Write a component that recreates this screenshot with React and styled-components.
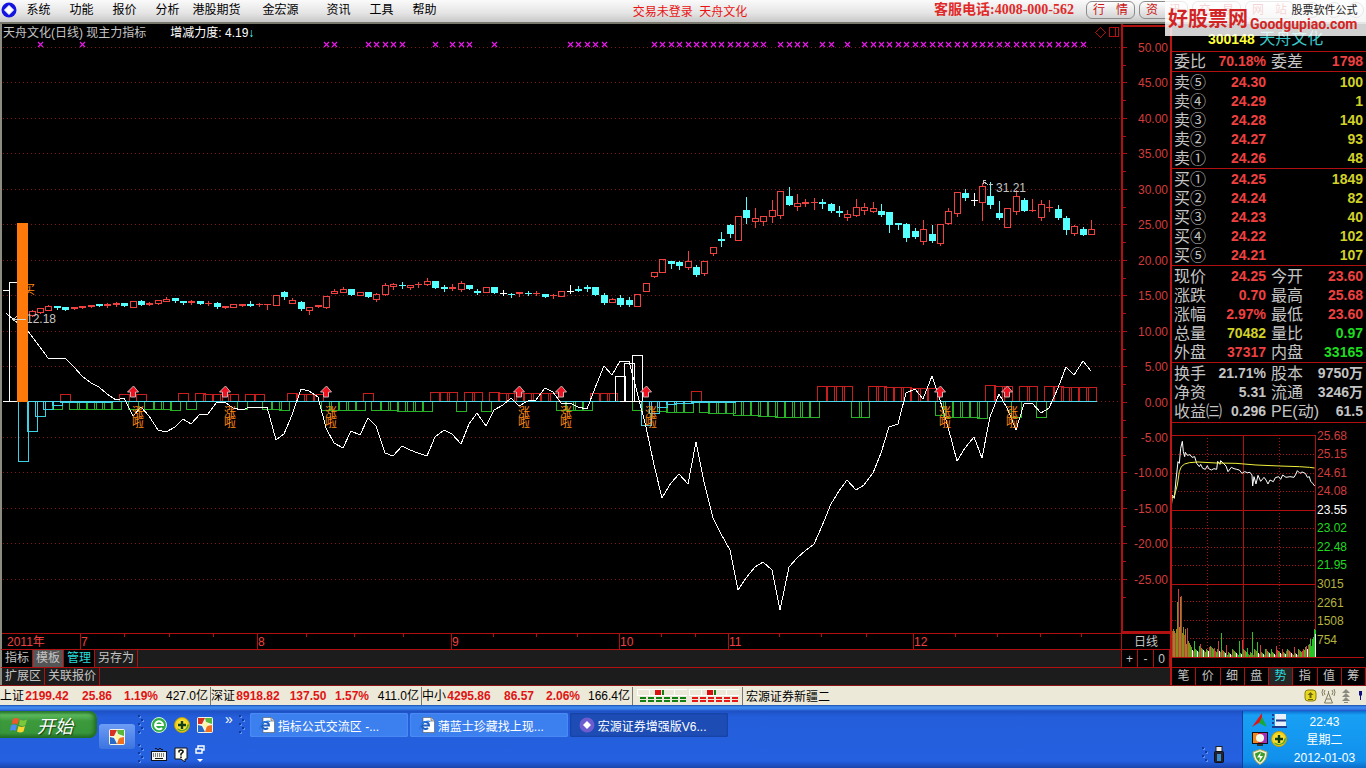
import React from "react";
import styled, { createGlobalStyle } from "styled-components";

const RED = "#f04040";
const LINE = "#b01010";
const GRID = "#861616";
const CYAN = "#54ffff";
const GRAY = "#c4c4c4";
const YELLOW = "#d2d226";
const GREEN = "#1fdc1f";
const SANS = '"Liberation Sans", "Noto Sans CJK SC", sans-serif';

const menuItems = [
  ["系统", 43],
  ["功能", 43],
  ["报价", 43],
  ["分析", 43],
  ["港股期货", 55],
  ["金宏源", 73],
  ["资讯", 43],
  ["工具", 43],
  ["帮助", 43],
];

const sells = [
  ["卖⑤", "24.30", "100"],
  ["卖④", "24.29", "1"],
  ["卖③", "24.28", "140"],
  ["卖②", "24.27", "93"],
  ["卖①", "24.26", "48"],
];

const buys = [
  ["买①", "24.25", "1849"],
  ["买②", "24.24", "82"],
  ["买③", "24.23", "40"],
  ["买④", "24.22", "102"],
  ["买⑤", "24.21", "107"],
];

const details = [
  ["现价", "24.25", RED, "今开", "23.60", RED],
  ["涨跌", "0.70", RED, "最高", "25.68", RED],
  ["涨幅", "2.97%", RED, "最低", "23.60", RED],
  ["总量", "70482", YELLOW, "量比", "0.97", GREEN],
  ["外盘", "37317", RED, "内盘", "33165", GREEN],
];

const finance = [
  ["换手", "21.71%", GRAY, "股本", "9750万", GRAY],
  ["净资", "5.31", GRAY, "流通", "3246万", GRAY],
  ["收益㈢", "0.296", GRAY, "PE(动)", "61.5", GRAY],
];

const indexes = [
  ["上证", "2199.42", "25.86", "1.19%", "427.0亿"],
  ["深证", "8918.82", "137.50", "1.57%", "411.0亿"],
  ["中小", "4295.86", "86.57", "2.06%", "166.4亿"],
];

const sideTabs = ["笔", "价", "细", "盘", "势", "指", "值", "筹"];

// one bar every STEP pixels, the first one at FIRST
const FIRST = 6.4;
const STEP = 8.41;
const ZERO = 401;
const barX = (i) => Math.round(FIRST + i * STEP);

// kind, body top, body bottom, high, low; starts at bar 3
const candles = `r 311 315 310 316|r 308 312 308 313|r 306 310 305 310|c 306 308 306 309|c 307 310 307 310
|d 307 309 307 309|d 306 308 306 308|d 305 307 305 307|c 304 306 304 306|d 304 306 303 307|d 303 305 302 306
|c 303 306 303 306|r 301 307 301 307|c 301 305 300 305|d 303 305 302 305|r 300 303 300 304|r 299 301 297 301
|c 298 301 298 302|c 301 303 301 304|d 301 303 300 304|c 301 304 301 304|d 303 304 301 305|c 303 307 302 308
|d 306 308 306 308|r 304 307 304 307|d 304 306 304 306|c 304 306 301 306|d 304 305 303 306|d 304 305 304 309
|r 295 305 295 305|c 292 297 291 299|r 300 303 298 303|c 302 309 301 310|r 307 310 307 314|d 305 307 305 307
|r 296 307 296 308|r 291 293 289 293|r 289 292 287 292|c 289 295 289 295|r 292 295 292 295|c 292 297 292 297
|r 294 299 293 301|r 285 294 283 295|r 284 286 283 289|c 285 286 282 288|r 285 287 285 289|d 284 285 282 287
|r 281 284 278 285|c 281 288 281 288|c 287 289 285 291|d 287 289 284 290|r 283 289 281 291|c 285 289 285 289
|c 291 293 289 294|r 287 292 287 292|c 287 293 287 293|w 293 294 290 295|c 294 295 293 297|d 292 294 292 296
|c 293 294 291 295|d 293 294 291 295|c 294 297 294 297|d 295 296 294 298|r 291 296 291 296|w 291 292 285 293
|c 289 291 286 291|c 287 289 285 291|c 287 295 287 295|c 295 303 293 304|r 299 302 298 302|c 298 305 295 306
|c 300 305 297 306|r 294 306 294 306|r 283 291 283 291|r 272 276 272 277|r 259 272 259 272|c 261 264 261 268
|c 262 266 261 269|r 261 267 251 269|c 267 275 265 276|r 261 273 261 275|r 247 253 247 255|c 239 241 232 246
|c 225 234 224 237|r 216 240 216 240|c 210 218 197 223|r 218 221 208 227|r 216 221 216 225|r 210 216 200 222
|r 191 215 191 218|c 196 205 187 205|r 203 206 194 210|d 202 204 199 206|d 202 203 198 209|c 202 204 199 208
|c 204 211 203 212|c 211 213 206 216|r 214 217 210 220|r 207 215 199 216|r 207 210 203 214|r 208 211 202 212
|c 211 215 204 216|c 212 225 212 232|c 223 225 223 229|c 224 238 223 241|c 231 237 228 238|r 229 241 220 244
|c 234 241 225 242|r 224 243 224 245|r 211 223 208 224|r 192 213 192 216|c 193 198 189 200|w 200 201 193 205
|r 186 202 183 220|c 196 205 182 208|c 213 218 201 219|r 208 227 208 227|r 196 211 190 214|c 200 211 198 211
|d 210 211 199 211|r 204 217 200 220|d 207 208 200 211|c 209 218 205 219|c 218 230 216 234|r 226 233 225 235
|c 229 235 227 235|r 229 234 220 234`
  .replace(/\n/g, "")
  .split("|")
  .map((row, k) => {
    const [kind, ...v] = row.split(" ");
    return { i: k + 3, kind, v: v.map(Number) };
  });

const trend = [
  358, 359, 358, 367, 376, 383, 387, 394, 400, 398, 416, 407, 416, 430, 432,
  427, 419, 424, 414, 414, 402, 402, 408, 410, 407, 407, 407, 440, 434, 415,
  389, 391, 397, 428, 443, 448, 431, 435, 418, 426, 453, 456, 446, 450, 453,
  456, 437, 430, 434, 444, 424, 413, 426, 410, 405, 398, 406, 401, 400, 388,
  392, 403, 403, 407, 409, 388, 366, 375, 361, 361, 392, 427, 465, 498, 483,
  474, 484, 442, 482, 518, 534, 550, 590, 578, 567, 562, 570, 610, 567, 558,
  551, 544, 526, 504, 491, 480, 490, 485, 473, 453, 427, 424, 393, 389, 399,
  376, 400, 427, 461, 448, 437, 458, 417, 394, 408, 430, 404, 403, 413, 408,
  388, 367, 375, 361, 371,
];
const trendLine =
  "6,313 14,320 28,331 " +
  trend.map((y, k) => `${barX(k + 5)},${y}`).join(" ");

// from bar, to bar, outer edge
const redBars = [
  [7, 7, 394], [14, 14, 394], [16, 16, 394], [21, 21, 393], [23, 23, 393],
  [24, 27, 394], [29, 30, 394], [34, 34, 393], [35, 37, 394], [43, 43, 393],
  [51, 53, 392], [55, 56, 392], [58, 58, 392], [59, 65, 393], [70, 72, 393],
  [82, 82, 391], [97, 100, 386], [103, 104, 386], [105, 107, 387],
  [108, 110, 388], [117, 117, 385], [118, 119, 386], [121, 122, 386],
  [124, 125, 386], [126, 129, 387],
];
const greenBars = [
  [6, 6, 409], [8, 13, 409], [15, 15, 409], [17, 19, 409], [20, 20, 410],
  [22, 22, 409], [28, 28, 409], [31, 32, 409], [33, 33, 410], [38, 42, 410],
  [44, 46, 410], [47, 50, 411], [54, 54, 411], [57, 57, 411], [66, 69, 410],
  [75, 75, 410], [78, 78, 411], [79, 81, 412], [83, 83, 412], [84, 86, 413],
  [87, 89, 415], [90, 91, 416], [92, 96, 417], [101, 102, 417],
  [111, 111, 415], [112, 115, 417], [116, 116, 418], [120, 120, 417],
  [123, 123, 417],
];
const cyanBars = [
  [2, 2, 461], [3, 3, 431], [4, 4, 416], [5, 5, 409], [6, 6, 405],
  [7, 12, 402], [76, 76, 425], [77, 77, 413], [78, 78, 407], [79, 79, 404],
  [80, 81, 403], [82, 86, 402],
];
const whiteBars = [[73, 73, 376], [74, 74, 363], [75, 75, 355]];

const crosses = [
  [4, 4], [9, 9], [38, 39], [43, 47], [51, 51], [53, 55], [58, 58], [67, 71],
  [77, 90], [92, 95], [97, 98], [100, 100], [102, 128],
];
const signals = [15, 26, 38, 61, 66, 76, 111, 119];

const expand = (list) =>
  list.flatMap(([from, to, y]) =>
    Array.from({ length: to - from + 1 }, (_, k) => [from + k, y])
  );

const scale = Array.from({ length: 16 }, (_, k) => ({
  label: (50 - k * 5).toFixed(2),
  y: Math.round(47 + k * 35.45),
}));

const months = [
  [80, "7"], [257, "8"], [451, "9"], [619, "10"], [728, "11"], [913, "12"],
];
const weeks = [
  124, 169, 213, 306, 354, 403, 493, 536, 577, 661, 695, 779, 821, 866, 955,
  997, 1040, 1081,
];

function Bars({ list, color }) {
  return expand(list).map(([i, y]) => (
    <rect
      key={i}
      x={barX(i) - 5 + 0.5}
      y={Math.min(y, ZERO) + 0.5}
      width={10}
      height={Math.abs(ZERO - y)}
      fill="none"
      stroke={color}
    />
  ));
}

function Candle({ i, kind, v }) {
  const [top, bottom, high, low] = v;
  const x = barX(i);
  const color = { r: RED, d: RED, c: CYAN, w: "#fff" }[kind];
  if (kind === "r") {
    return (
      <g stroke={color} fill="none">
        {high < top && <path d={`M${x + 0.5} ${high}V${top}`} />}
        {low > bottom && <path d={`M${x + 0.5} ${bottom}V${low + 1}`} />}
        <rect x={x - 2.5} y={top + 0.5} width={6} height={bottom - top} />
      </g>
    );
  }
  return (
    <g fill={color}>
      <rect x={x} y={high} width={1} height={low - high + 1} />
      <rect
        x={x - 3}
        y={top}
        width={7}
        height={kind === "w" ? 1 : bottom - top}
      />
    </g>
  );
}

function MainChart() {
  return (
    <ChartSvg viewBox="0 24 1170 625" shapeRendering="crispEdges">
      <rect x="0" y="24" width="2" height="625" fill="#8c8c80" />
      {scale.map(({ label, y }) => (
        <g key={label}>
          {label !== "0.00" && (
            <path
              d={`M3 ${y + 0.5}H1120`}
              stroke={GRID}
              strokeDasharray="1 3"
            />
          )}
          <path
            d={`M1123 ${y + 0.5}h4M1123 ${y + 18.5}h3`}
            stroke={LINE}
          />
          <ChartText x="1168" y={y + 5} textAnchor="end" fill="#d23c3c">
            {label}
          </ChartText>
        </g>
      ))}
      <path d="M1097 401.5H1120" stroke={GRID} strokeDasharray="1 3" />
      <path d="M1122 24V632H1170M1121 25.5H1170" stroke={LINE} strokeWidth="2" fill="none" />

      {expand(crosses).map(([i]) => (
        <path
          key={i}
          d={`M${barX(i) - 2} 42l5 5m0 -5l-5 5`}
          stroke="#e81be8"
          strokeWidth="1.2"
          fill="none"
          shapeRendering="auto"
        />
      ))}
      <g fill="none" stroke={LINE}>
        <path d="M1100.5 27.5l5 5l-5 5l-5 -5z" />
        <path d="M1109.5 27.5h9v9h-9zM1115.5 27.5v9" />
      </g>

      <Bars list={redBars} color="#c81e1e" />
      <Bars list={greenBars} color="#27b427" />
      <Bars list={cyanBars} color="#3cd2e6" />
      <Bars list={whiteBars} color="#fff" />
      <path d="M3 401.5H1097" stroke="#50dcf0" />
      <path d="M3 401.5H17M620 401.5H642" stroke="#fff" />

      {candles.map((c) => (
        <Candle key={c.i} {...c} />
      ))}
      <polyline points={trendLine} fill="none" stroke="#fff" />
      <path d="M9.5 401V282.5H17M3 290.5H9" fill="none" stroke="#fff" />

      {signals.map((i) => (
        <g key={i}>
          <path
            d={`M${barX(i)} 386l5 6h-3v5h-5v-5h-3z`}
            transform="translate(.5 0)"
            fill="#f01020"
            stroke="#c8b4b4"
            shapeRendering="auto"
          />
          <SignalText x={barX(i) - 1} y="417">涨</SignalText>
          <SignalText x={barX(i) - 1} y="427">啦</SignalText>
        </g>
      ))}

      <SignalText x="23" y="294">买</SignalText>
      <ChartText x="26" y="323" fill={GRAY}>12.18</ChartText>
      <rect x="17" y="223" width="11" height="179" fill="#ff7a0a" />
      <path d="M13 319.5H26M17 316.5l-4 3l4 3" stroke="#d8d8c8" fill="none" />
      <path d="M986 180.5h-3v3M983 181l5 4M989 184.5h4" stroke={GRAY} fill="none" />
      <ChartText x="996" y="192" fill={GRAY}>31.21</ChartText>

      <path d="M2 633.5H1170M1121.5 633V649" stroke={LINE} />
      <ChartText x="7" y="646" fill={RED}>2011年</ChartText>
      {months.map(([x, label]) => (
        <g key={x}>
          <path d={`M${x + 0.5} 633V649`} stroke={LINE} />
          <ChartText x={x + 1} y="646" fill={RED}>
            {label}
          </ChartText>
        </g>
      ))}
      {weeks.map((x) => (
        <path key={x} d={`M${x + 0.5} 633v4`} stroke={LINE} />
      ))}
      <ChartText x="1146" y="646" textAnchor="middle" fill={GRAY}>
        日线
      </ChartText>
    </ChartSvg>
  );
}

const priceLine =
  "16,262 18,225 25,235 30,180 36,125 40,130 44,85 49,64 52,95 56,110 58,97 64,106 72,104 78,112 86,110 92,130 100,140 104,133 110,145 118,148 124,137 128,146 136,150 144,146 152,148 155,124 162,133 164,122 174,132 180,138 186,155 196,142 204,146 212,148 220,150 228,160 236,155 244,158 252,157 258,165 260,198 264,170 270,192 276,166 284,184 294,172 300,180 306,192 312,180 322,185 328,173 338,170 344,178 350,165 360,172 372,170 384,172 390,162 394,152 402,160 408,156 418,160 424,172 430,170 434,184 440,190 446,198";
const averageLine =
  "16,262 18,235 26,225 34,195 40,155 46,140 56,132 70,128 96,126 150,129 210,130 270,135 340,138 400,140 430,142 446,144";

const miniLabels = [
  ["25.68", 440, "#d23c3c"],
  ["25.15", 458, "#d23c3c"],
  ["24.61", 477, "#d23c3c"],
  ["24.08", 495, "#d23c3c"],
  ["23.55", 514, "#fff"],
  ["23.02", 532, GREEN],
  ["22.48", 551, GREEN],
  ["21.95", 569, GREEN],
  ["3015", 588, "#b4b43c"],
  ["2261", 607, "#b4b43c"],
  ["1508", 625, "#b4b43c"],
  ["754", 644, "#b4b43c"],
];

// minute volume: tall after the open, quiet in between, rising at the close
const volumePeaks = {
  4: 28, 5: 55, 6: 68, 7: 30, 8: 60, 9: 61, 10: 24, 11: 30, 12: 22, 13: 28,
  15: 29, 16: 16, 22: 16, 28: 13, 37: 10, 42: 9, 46: 16, 49: 24, 54: 12, 67: 16,
  70: 17, 75: 9, 80: 25, 85: 15, 88: 12, 94: 8, 99: 8, 104: 11, 110: 8, 114: 6,
  118: 5, 122: 10, 130: 6, 134: 11, 136: 12, 138: 18, 140: 18, 141: 20, 142: 28,
  143: 27,
};
const volumeColors = ["#27c427", "#d23c3c", "#fff", "#27c427", "#8c8c1e", "#d23c3c"];
const volumes = Array.from({ length: 144 }, (_, k) => {
  const noise = (k * 7919) % 11;
  const base = k < 20 ? 26 - k : k < 50 ? 5 : k > 130 ? 7 : 2;
  let color = volumeColors[noise % 6];
  if (k < 18) color = k % 3 ? "#8c8c1e" : "#c83c3c";
  if (k > 40 && volumePeaks[k]) color = k % 2 && k < 138 ? "#27c427" : "#d23c3c";
  if (k === 80 || k > 137) color = "#27c427";
  return { h: volumePeaks[k] || base + (noise % 7), color };
});

function MiniChart() {
  return (
    <ChartSvg viewBox="1172 423 194 244" shapeRendering="crispEdges">
      <g stroke={LINE} fill="none">
        <path d="M1172 435.5H1315M1172 510.5H1315M1172 584.5H1315M1172 657.5H1364M1243.5 435V657M1315.5 435V657" />
        <path
          strokeDasharray="1 2"
          d="M1172 454.5H1315M1172 473.5H1315M1172 491.5H1315M1172 528.5H1315M1172 547.5H1315M1172 565.5H1315M1172 601.5H1315M1172 620.5H1315M1172 638.5H1315M1207.5 435V657M1279.5 435V657"
        />
      </g>
      {volumes.map(({ h, color }, k) => (
        <rect key={k} x={1172 + k} y={657 - h} width="1" height={h} fill={color} />
      ))}
      <rect x="1315" y="634" width="1" height="23" fill="#fff" />
      <g transform="translate(1166 420) scale(.33333)" fill="none" shapeRendering="auto">
        <polyline points={priceLine} stroke="#fff" strokeWidth="3" />
        <polyline points={averageLine} stroke="#f0f03c" strokeWidth="3" />
      </g>
      {miniLabels.map(([label, y, color]) => (
        <ChartText key={label} x="1317" y={y} fill={color}>
          {label}
        </ChartText>
      ))}
    </ChartSvg>
  );
}

function OrderTable({ rows }) {
  return (
    <QuoteTable>
      <tbody>
        {rows.map(([label, price, volume]) => (
          <tr key={label}>
            <Label>{label}</Label>
            <Value $color={RED}>{price}</Value>
            <Value $color={YELLOW} $span>
              {volume}
            </Value>
          </tr>
        ))}
      </tbody>
    </QuoteTable>
  );
}

function PairTable({ rows }) {
  return (
    <QuoteTable>
      <tbody>
        {rows.map(([a, av, ac, b, bv, bc]) => (
          <tr key={a}>
            <Label>{a}</Label>
            <Value $color={ac}>{av}</Value>
            <Label $second>{b}</Label>
            <Value $color={bc}>{bv}</Value>
          </tr>
        ))}
      </tbody>
    </QuoteTable>
  );
}

function BrowserIcon() {
  return (
    <svg width="16" height="16" viewBox="0 0 16 16">
      <path d="M4 .5h8l3.500 3.500v11.500H4z" fill="#fff" stroke="#555" strokeWidth=".6" />
      <path d="M12 .5v3.500h3.500" fill="#ccc" stroke="#555" strokeWidth=".6" />
      <path d="M3 8.500h7A3.600 3.600 0 1 0 9 11" fill="none" stroke="#1f5fc0" strokeWidth="2" />
      <path d="M.5 13C0 8 6 3 11.500 4.500" fill="none" stroke="#2a7ae0" strokeWidth="1.200" />
    </svg>
  );
}

function ColorCube() {
  return (
    <svg width="16" height="16" viewBox="0 0 16 16">
      <rect width="16" height="16" rx="2" fill="#f4f4e4" />
      <path d="M1 1h7l-3 6H1z" fill="#d83020" />
      <path d="M8 1h7v6l-6-2z" fill="#58b838" />
      <path d="M1 8l4 1 3 6H1z" fill="#2868c8" />
      <path d="M10 9l5-1v7H8z" fill="#f0701c" />
      <path d="M6 6l4-1 1 4-4 2z" fill="#fff6a0" />
    </svg>
  );
}

function PlusBall() {
  return (
    <svg width="16" height="16" viewBox="0 0 16 16">
      <circle cx="8" cy="8" r="7.500" fill="#f2d21c" stroke="#b89a10" />
      <path d="M3 12A7 7 0 0 0 15 7z" fill="#58a828" />
      <circle cx="8" cy="8" r="5" fill="#fbe23a" />
      <path d="M8 4v8M4 8h8" stroke="#123c12" strokeWidth="2.400" />
    </svg>
  );
}

function GreenBrowser() {
  return (
    <svg width="16" height="16" viewBox="0 0 16 16">
      <circle cx="8" cy="8" r="7.500" fill="#2fae48" stroke="#d8f4dc" />
      <path d="M4 8h8A4 4 0 1 0 11 11" fill="none" stroke="#fff" strokeWidth="2" />
    </svg>
  );
}

function KeyboardIcon() {
  return (
    <svg width="16" height="14" viewBox="0 0 16 14">
      <path d="M4 2q1-2 2 0t2 0t2 0t2 0" stroke="#111" fill="none" />
      <rect x=".5" y="4.500" width="15" height="9" fill="#f4f4f0" stroke="#111" />
      <path d="M2 7h12M2 9h12" stroke="#111" strokeDasharray="1 1" />
      <path d="M4 11.500h8" stroke="#111" />
    </svg>
  );
}

function HelpIcon() {
  return (
    <svg width="14" height="15" viewBox="0 0 14 15">
      <path d="M1 1h12v11h-2v3l-4-3H1z" fill="#fffff0" stroke="#111" />
      <path d="M5 5.500V4q2-2 4 0v1L7 7v1.500M7 9.500V11" fill="none" stroke="#111" strokeWidth="1.600" />
    </svg>
  );
}

function RestoreIcon() {
  return (
    <svg width="10" height="18" viewBox="0 0 10 18">
      <path d="M3 4V1h6v4H7M1 4h6v4H1z" fill="none" stroke="#fff" strokeWidth="1.400" />
      <path d="M2 14h6l-3 3z" fill="#fff" />
    </svg>
  );
}

function Grip({ rows }) {
  return (
    <svg width="6" height={rows * 4} viewBox={`0 0 6 ${rows * 4}`} shapeRendering="crispEdges">
      {Array.from({ length: rows }, (_, r) => (
        <g key={r}>
          <rect x={r % 2 ? 4 : 1} y={r * 4 + 1} width="2" height="2" fill="#5c92f4" />
          <rect x={r % 2 ? 3 : 0} y={r * 4} width="2" height="2" fill="#12389c" />
        </g>
      ))}
    </svg>
  );
}

function Gauges() {
  const cells = [0, 1, 2, 3, 4, 5];
  return (
    <svg width="104" height="14" viewBox="0 0 104 14" shapeRendering="crispEdges">
      {[[0, "#128012"], [52, "#e41818"]].map(([x, color]) => (
        <g key={x}>
          <path d={`M${x} .5h50M${x + 0.5} 0v6M${x + 12.5} 0v6M${x + 37.5} 0v6M${x} 6.500h50`} stroke="#fff" />
          <rect x={x + 18} y="1" width="6" height="5" fill="#d81010" />
          <rect x={x + 25} y="1" width="2" height="5" fill="#128012" />
          {cells.map((c) => (
            <g key={c} fill={color}>
              <rect x={x + 3 + c * 8} y="8" width="6" height="2" />
              <rect x={x + 3 + c * 8} y="11" width="6" height="2" />
            </g>
          ))}
        </g>
      ))}
    </svg>
  );
}

function StatusIcons() {
  return (
    <svg width="60" height="16" viewBox="0 0 60 16">
      <rect x="1" y="2" width="11" height="11" rx="3" fill="#e8d820" stroke="#8c8010" />
      <path d="M6.500 4l3 3h-2v3h-2V7h-2z" fill="#6c6408" />
      <path d="M4 11.500h5" stroke="#6c6408" />
      <g fill="none" stroke="#807c60">
        <path d="M24.500 5l-4 10h8zM22 11h5M24.500 3v3" />
        <path d="M21 2q-2 2 0 5M28 2q2 2 0 5M19 1q-2 3 0 7M30 1q2 3 0 7" />
      </g>
      <path d="M42 1l4 4h-8zM42 5l4 4h-8zM42 9l4 4h-8zM40 14h4v1h-4z" fill="#8a8a80" />
      <path d="M55 3h3v4l-1 1v4h-1V8l-1-1z" fill="#10107c" />
    </svg>
  );
}

function TrayIcons() {
  return (
    <TrayGrid>
      <svg width="16" height="16" viewBox="0 0 16 16">
        <path d="M0 14L10 0v8z" fill="#e41414" />
        <path d="M10 4l5 10-8-4z" fill="#18a838" />
      </svg>
      <svg width="16" height="16" viewBox="0 0 16 16">
        <rect x="4" y="1" width="11" height="13" fill="#e8f0fc" />
        <path d="M5 7.500h10M1 2h2M1 6h2M1 10h2M1 14h15" stroke="#1c3c90" strokeWidth="2" />
      </svg>
      <svg width="16" height="16" viewBox="0 0 16 16">
        <rect x=".5" y="1.500" width="15" height="11" fill="#d02858" stroke="#111" />
        <path d="M1 2h5v10H1z" fill="#f08820" />
        <path d="M11 2h4v10h-4z" fill="#a030c0" />
        <circle cx="8" cy="7" r="4" fill="#f4fce8" />
        <path d="M5 15h6v-2H5z" fill="#333" />
      </svg>
      <PlusBall />
      <svg width="16" height="16" viewBox="0 0 16 16">
        <path d="M8 .5L15 3q0 9-7 12.500Q1 12 1 3z" fill="#f4f4d8" stroke="#b8a850" />
        <path d="M8 2.500l5 2q-.5 6-5 9-4.500-3-5-9z" fill="#3c9c2c" />
        <path d="M9 3L5 8.500h3L7 13l4-6H8z" fill="#fff" />
      </svg>
    </TrayGrid>
  );
}

function App() {
  return (
    <>
      <GlobalStyle />
      <Desktop>
        <MenuBar>
          <svg width="16" height="16" viewBox="0 0 16 16">
            <circle cx="8" cy="8" r="7.500" fill="#1414e0" />
            <path d="M8 3.500L12.500 8 8 12.500 3.500 8z" fill="#fff" stroke="#fff" strokeLinejoin="round" />
          </svg>
          <Menu>
            {menuItems.map(([label, width]) => (
              <MenuItem key={label} $width={width}>
                {label}
              </MenuItem>
            ))}
          </Menu>
          <LoginState>交易未登录&nbsp; 天舟文化</LoginState>
          <Hotline>客服电话:4008-000-562</Hotline>
          <Pills>
            <Pill>
              <span>行</span>
              <span>情</span>
            </Pill>
            <Pill>
              <span>资</span>
              <span>讯</span>
            </Pill>
            <Pill>
              <span>交</span>
              <span>易</span>
            </Pill>
            <Pill>
              <span>网</span>
              <span>站</span>
            </Pill>
          </Pills>
          <WindowDots>
            <Dot />
            <Dot />
            <Dot />
          </WindowDots>
          <Watermark>
            <SiteName>好股票网</SiteName>
            <SiteUrl>
              <small>股票软件公式</small>
              Goodgupiao.com
            </SiteUrl>
          </Watermark>
        </MenuBar>

        <Workspace>
          <ChartPane>
            <ChartTitle>
              <span>天舟文化(日线) 现主力指标</span>
              <Strength>
                增减力度: 4.19<i>↓</i>
              </Strength>
            </ChartTitle>
            <MainChart />
            <TabRow>
              <Tab $black>指标</Tab>
              <Tab $active>模板</Tab>
              <Tab $black $cyan>管理</Tab>
              <Tab>另存为</Tab>
              <ZoomTools>
                <Tool>+</Tool>
                <Tool>-</Tool>
                <Tool>0</Tool>
              </ZoomTools>
            </TabRow>
            <TabRow>
              <Tab>扩展区</Tab>
              <Tab>关联报价</Tab>
            </TabRow>
          </ChartPane>

          <SidePanel>
            <StockName>
              <b>300148</b> 天舟文化
            </StockName>
            <Section>
              <PairTable rows={[["委比", "70.18%", RED, "委差", "1798", RED]]} />
            </Section>
            <Section $pad>
              <OrderTable rows={sells} />
            </Section>
            <Section $pad>
              <OrderTable rows={buys} />
            </Section>
            <Section $pad>
              <PairTable rows={details} />
            </Section>
            <Section $pad $bottom>
              <PairTable rows={finance} />
            </Section>
            <MiniChart />
            <SideTabs>
              {sideTabs.map((label) => (
                <SideTab key={label} $active={label === "势"}>
                  {label}
                </SideTab>
              ))}
            </SideTabs>
          </SidePanel>
        </Workspace>

        <StatusBar>
          {indexes.map(([name, value, change, percent, amount]) => (
            <IndexQuote key={name}>
              <span>{name}</span>
              <b>{value}</b>
              <b>{change}</b>
              <b>{percent}</b>
              <span>{amount}</span>
            </IndexQuote>
          ))}
          <GaugeBox>
            <Gauges />
          </GaugeBox>
          <Server>宏源证券新疆二</Server>
          <StatusIcons />
        </StatusBar>

        <Taskbar>
          <StartButton>
            <svg width="19" height="18" viewBox="0 0 19 18">
              <path d="M3 3q3-2 6 0L7.500 8.500q-3-2-6 0z" fill="#f0582c" />
              <path d="M10 3.500q3 2 7 0L15.500 9q-3 2-6.500 0z" fill="#7cc83c" />
              <path d="M1 9.500q3-2 6 0L5.500 15q-3-2-5.500 0z" fill="#4c8cf4" />
              <path d="M8.500 10q3 2 6.500 0L13.500 15.500q-3 2-6.500 0z" fill="#fcd430" />
            </svg>
            开始
          </StartButton>
          <CubeButton aria-label="桌面">
            <ColorCube />
          </CubeButton>
          <QuickLaunch>
            <QuickRow>
              <Grip rows={5} />
              <GreenBrowser />
              <PlusBall />
              <ColorCube />
              <More>»</More>
            </QuickRow>
            <QuickRow>
              <Grip rows={5} />
              <KeyboardIcon />
              <HelpIcon />
              <RestoreIcon />
            </QuickRow>
          </QuickLaunch>
          <Tasks>
            <Grip rows={5} />
            <Task>
              <BrowserIcon />
              指标公式交流区 -...
            </Task>
            <Task>
              <BrowserIcon />
              蒲蓝士珍藏找上现...
            </Task>
            <Task $active>
              <svg width="16" height="16" viewBox="0 0 16 16">
                <circle cx="8" cy="8" r="7.500" fill="#6c5cd0" />
                <path d="M8 4l4 4-4 4-4-4z" fill="#fff" />
              </svg>
              宏源证券增强版V6...
            </Task>
          </Tasks>
          <Devices>
            <Grip rows={4} />
            <svg width="10" height="17" viewBox="0 0 10 17">
              <rect x="2" y=".5" width="6" height="5" fill="#eee" stroke="#222" />
              <rect x=".5" y="5.500" width="9" height="11" rx="1" fill="#223" stroke="#111" />
              <rect x="3" y="8" width="4" height="7" fill="#3c8cc8" />
            </svg>
          </Devices>
          <Tray>
            <TrayIcons />
            <Clock>
              <span>22:43</span>
              <span>星期二</span>
              <span>2012-01-03</span>
            </Clock>
          </Tray>
        </Taskbar>
      </Desktop>
    </>
  );
}

const GlobalStyle = createGlobalStyle`
  * {
    box-sizing: border-box;
  }

  body {
    margin: 0;
    background: #000;
    font-family: ${SANS};
    font-size: 12px;
  }

  button {
    margin: 0;
    padding: 0;
    border: 0;
    background: none;
    font: inherit;
    color: inherit;
    white-space: nowrap;
  }

  svg {
    flex: none;
  }
`;

const Desktop = styled.div`
  display: flex;
  flex-direction: column;
  min-height: 100vh;
`;

const MenuBar = styled.header`
  position: relative;
  display: flex;
  align-items: center;
  height: 24px;
  padding: 0 2px 2px 1px;
  background: linear-gradient(#fafafa, #e4e4e4 60%, #c8c8c8);
  border-bottom: 2px solid #77776c;
  color: #000;
`;

const Menu = styled.nav`
  display: flex;
`;

const MenuItem = styled.button`
  width: ${(props) => props.$width}px;
  line-height: 20px;
`;

const LoginState = styled.div`
  flex: 1;
  text-align: center;
  color: #e81414;
`;

const Hotline = styled.div`
  font-family: "Liberation Serif", "Noto Sans CJK SC", serif;
  font-size: 14px;
  font-weight: bold;
  line-height: 20px;
  color: #e02a2a;
`;

const Pills = styled.div`
  display: flex;
  gap: 4px;
  margin: 0 10px 0 12px;
`;

const Pill = styled.button`
  display: flex;
  justify-content: space-between;
  width: 49px;
  height: 18px;
  padding: 0 6px;
  border: 1px solid #8c8c8c;
  border-radius: 6px;
  background: linear-gradient(#fff, #d4d4d4);
  color: #c81414;
  line-height: 16px;
`;

const WindowDots = styled.div`
  display: flex;
  gap: 6px;
`;

const Dot = styled.span`
  width: 16px;
  height: 16px;
  border: 1px solid #777;
  border-radius: 50%;
`;

/* floats over the menu bar and the head of the side panel */
const Watermark = styled.div`
  position: absolute;
  top: 0;
  right: 0;
  z-index: 2;
  display: flex;
  gap: 2px;
  width: 201px;
  height: 36px;
  padding-left: 3px;
  background: rgba(255, 255, 255, 0.82);
  color: #d22424;
`;

const SiteName = styled.span`
  font-size: 20px;
  font-weight: bold;
  line-height: 38px;
`;

const SiteUrl = styled.span`
  display: flex;
  flex-direction: column;
  padding-top: 5px;
  font-family: Roboto, ${SANS};
  font-size: 14px;
  font-weight: bold;
  line-height: 14px;

  small {
    align-self: flex-end;
    font-size: 11px;
    font-weight: normal;
    line-height: 12px;
    color: #222;
  }
`;

const Workspace = styled.main`
  display: grid;
  grid-template-columns: 1fr 196px;
`;

const ChartPane = styled.section`
  position: relative;
  min-width: 0;
`;

const ChartTitle = styled.div`
  position: absolute;
  top: 0;
  left: 3px;
  display: flex;
  gap: 24px;
  line-height: 18px;
  color: ${GRAY};
`;

const Strength = styled.span`
  color: #fff;

  i {
    font-style: normal;
    color: ${CYAN};
  }
`;

const ChartSvg = styled.svg`
  display: block;
  width: 100%;
`;

const ChartText = styled.text`
  font-family: ${SANS};
  font-size: 12px;
`;

const SignalText = styled.text`
  font-family: ${SANS};
  font-size: 12px;
  fill: #ff8a14;
`;

const TabRow = styled.div`
  display: flex;
  height: 18px;
  border-top: 1px solid ${LINE};
  border-left: 2px solid #8c8c80;
  background: #1c1c1c;
  color: ${GRAY};
`;

const Tab = styled.button`
  padding: 0 3px;
  border-right: 1px solid ${LINE};
  background: ${(props) =>
    props.$active ? "#555" : props.$black ? "#000" : "none"};
  color: ${(props) => (props.$cyan ? "#28dcdc" : GRAY)};
  line-height: 17px;
`;

const ZoomTools = styled.div`
  display: flex;
  margin-left: auto;
  border-left: 1px solid ${LINE};
  background: #000;
`;

const Tool = styled.button`
  width: 16px;
  border-right: 1px solid ${LINE};
  line-height: 16px;
`;

const SidePanel = styled.aside`
  border-left: 2px solid #c01414;
`;

const StockName = styled.h1`
  height: 28px;
  margin: 0;
  padding-left: 36px;
  border-bottom: 1px solid ${LINE};
  font-size: 16px;
  font-weight: normal;
  line-height: 29px;
  color: #3cc8c8;

  b {
    font-size: 14px;
    color: #ffff3c;
  }
`;

const Section = styled.section`
  padding-top: ${(props) => (props.$pad ? 1 : 0)}px;
  padding-bottom: ${(props) => (props.$bottom ? 1 : 0)}px;
  border-bottom: 1px solid ${LINE};
`;

const QuoteTable = styled.table`
  display: block;

  tbody {
    display: block;
  }

  tr {
    display: grid;
    grid-template-columns: 32px 1fr 37px 1fr;
    height: 19px;
    padding: 0 3px 0 2px;
    line-height: 19px;
    white-space: nowrap;
  }
`;

const Label = styled.th.attrs({ scope: "row" })`
  width: 0;
  padding: 0 0 0 ${(props) => (props.$second ? 5 : 0)}px;
  font-size: 16px;
  font-weight: normal;
  text-align: left;
  color: ${GRAY};
`;

const Value = styled.td`
  grid-column: ${(props) => (props.$span ? "span 2" : "auto")};
  padding: 0;
  font-size: 14px;
  font-weight: bold;
  text-align: right;
  color: ${(props) => props.$color};
`;

const SideTabs = styled.nav`
  display: grid;
  grid-template-columns: repeat(8, 1fr);
  height: 18px;
  border-top: 1px solid ${LINE};
`;

const SideTab = styled.button`
  border-right: 1px solid ${LINE};
  background: ${(props) => (props.$active ? "#262626" : "#000")};
  color: ${(props) => (props.$active ? "#28dcdc" : GRAY)};
  line-height: 17px;
`;

const StatusBar = styled.footer`
  display: flex;
  align-items: center;
  height: 20px;
  padding-right: 2px;
  border-top: 1px solid #8c1414;
  background: #ece9d8;
  color: #000;
`;

const IndexQuote = styled.div`
  display: grid;
  grid-template-columns: 24px 46px 54px 33px 51px;
  border-right: 1px solid #777;
  padding-right: 2px;
  line-height: 18px;
  white-space: nowrap;

  b {
    text-align: center;
    color: #e01414;
  }

  span:last-child {
    text-align: right;
  }
`;

const GaugeBox = styled.div`
  display: flex;
  padding: 2px 1px 2px 4px;
  border-right: 1px solid #777;
`;

const Server = styled.span`
  flex: 1;
  padding-left: 3px;
`;

const Taskbar = styled.footer`
  display: flex;
  align-items: flex-start;
  flex: 1;
  min-height: 63px;
  padding-top: 6px;
  background: linear-gradient(
    #1e4fb0 0,
    #3f8cf0 2px,
    #3a80e8 4px,
    #1d50c4 6px,
    #245edb 12px,
    #2460e0 56px,
    #1a45ac 100%
  );
  color: #fff;
`;

const StartButton = styled.button`
  display: flex;
  align-items: center;
  gap: 8px;
  width: 97px;
  height: 27px;
  padding-left: 10px;
  border-radius: 0 8px 8px 0;
  background: linear-gradient(#2c7a2c, #5cb85c 4px, #3c9a3c 10px, #38963a 22px, #226e24);
  box-shadow: inset -3px 0 4px #1f6a24;
  font-size: 18px;
  font-style: italic;
  text-shadow: 1px 1px 1px #143c14;
`;

const CubeButton = styled.button`
  display: flex;
  align-items: center;
  justify-content: center;
  width: 36px;
  height: 25px;
  margin: 13px 3px 0 2px;
  border-radius: 3px;
  background: linear-gradient(#6c9cf4, #3c74e0);
`;

const QuickLaunch = styled.div`
  display: flex;
  flex-direction: column;
  gap: 1px;
`;

const QuickRow = styled.div`
  display: flex;
  align-items: center;
  gap: 7px;
  height: 28px;
`;

const More = styled.span`
  align-self: flex-start;
  padding-left: 5px;
  font-size: 14px;
  line-height: 16px;
`;

const Tasks = styled.nav`
  display: flex;
  flex: 1;
  align-items: center;
  gap: 2px;
  min-width: 0;
  padding: 2px 0 0 6px;

  > svg {
    margin-right: 3px;
  }
`;

const Task = styled.button`
  display: flex;
  flex: 0 1 158px;
  align-items: center;
  gap: 3px;
  height: 24px;
  padding-left: 9px;
  overflow: hidden;
  border-radius: 2px;
  background: ${(props) => (props.$active ? "#1c4cb4" : "#3c80f0")};
  box-shadow: inset 0 0 2px ${(props) => (props.$active ? "#0c2c80" : "#6ca4fc")};
`;

const Devices = styled.div`
  display: flex;
  align-items: center;
  gap: 6px;
  margin: 35px 18px 0 0;
`;

const Tray = styled.div`
  display: flex;
  align-self: stretch;
  gap: 6px;
  width: 124px;
  padding: 2px 0 0 9px;
  border-left: 1px solid #0c3c9c;
  background: linear-gradient(#0c6cd0, #18a0f4 4px, #1090ec 50px, #0c6cc8);
`;

const TrayGrid = styled.div`
  display: grid;
  grid-template-columns: 16px 16px;
  grid-auto-rows: 16px;
  gap: 2px 3px;
  align-content: start;
`;

const Clock = styled.time`
  display: flex;
  flex-direction: column;
  flex: 1;
  align-items: center;
  padding-right: 10px;
  line-height: 18px;
  white-space: nowrap;
`;

export default App;
